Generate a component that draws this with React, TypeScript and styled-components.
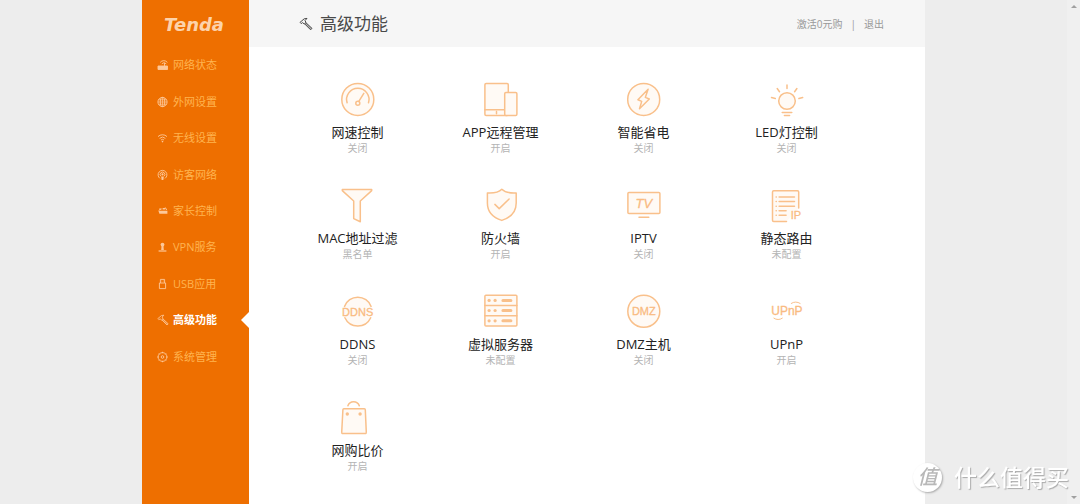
import React from "react";
import styled, { createGlobalStyle, css } from "styled-components";

const GlobalStyle = createGlobalStyle`
  *, *::before, *::after { box-sizing: border-box; }
  body {
    margin: 0;
    background: #ededed;
    font-family: "Open Sans", "Noto Sans CJK SC", sans-serif;
    color: #222;
  }
  button { font: inherit; color: inherit; }
`;

const Page = styled.div`
  display: flex;
  min-height: 100vh;
`;

const Stage = styled.div`
  flex: 1;
  display: flex;
  justify-content: center;
`;

const Shell = styled.div`
  display: flex;
  width: 100%;
  max-width: 783px;
  background: #fff;
`;

const Sidebar = styled.aside`
  flex: 0 0 107px;
  background: #ee6f00;
`;

const Brand = styled.a`
  display: flex;
  align-items: center;
  height: 47px;
  padding: 2px 0 0 22px;
  color: #fdd3ab;
  font: italic bold 18px/20px "DejaVu Sans", sans-serif;
  text-decoration: none;
`;

const Nav = styled.nav`
  display: grid;
  grid-auto-rows: 1fr;
  height: 328px;
`;

const NavLink = styled.a<{ $active?: boolean }>`
  position: relative;
  display: flex;
  align-items: center;
  gap: 4px;
  padding-left: 15px;
  color: #ffb450;
  font-size: 11px;
  line-height: 16px;
  text-decoration: none;

  svg { color: #fdc89a; }

  ${(p) =>
    p.$active &&
    css`
      color: #fff;
      font-weight: bold;

      &::after {
        content: "";
        position: absolute;
        right: 0;
        top: 50%;
        margin-top: -8px;
        border: 8px solid transparent;
        border-left: 0;
        border-right-color: #fff;
      }
    `}
`;

const Main = styled.main`
  flex: 1;
  min-width: 0;
`;

const Header = styled.header`
  display: flex;
  align-items: center;
  justify-content: space-between;
  height: 47px;
  padding: 0 41px 0 50px;
  background: #f6f6f6;
`;

const Heading = styled.h1`
  display: flex;
  align-items: center;
  gap: 7px;
  margin: 0;
  color: #4a4a4a;
  font-size: 17px;
  font-weight: normal;
  line-height: 24px;
`;

const Account = styled.div`
  display: flex;
  gap: 8px;
  color: #999;
  font-size: 10px;
  line-height: 16px;

  a { color: inherit; text-decoration: none; }
`;

const FeatureGrid = styled.div`
  display: grid;
  grid-template-columns: repeat(4, 1fr);
  row-gap: 33px;
  padding: 35px 67px 30px 37px;
`;

const Tile = styled.button`
  display: flex;
  flex-direction: column;
  align-items: center;
  padding: 0;
  border: 0;
  background: none;
  cursor: pointer;
`;

const TileIcon = styled.svg`
  width: 37px;
  height: 37px;
  margin-bottom: 4px;
  overflow: visible;
  fill: #fffaf5;
  stroke: #f9c08b;
  stroke-width: 1.5;
  stroke-linejoin: round;
  stroke-linecap: round;

  .line { fill: none; }
  .thick { fill: none; stroke-width: 3; }
  .solid { fill: #f9c08b; stroke: none; }
  text {
    fill: #f9bb82;
    stroke: #f9bb82;
    stroke-width: 0.3;
    font-family: "Liberation Sans", sans-serif;
    text-anchor: middle;
  }
`;

const TileTitle = styled.span`
  color: #222;
  font-size: 13px;
  line-height: 18px;
`;

const TileStatus = styled.span`
  color: #b4b4b4;
  font-size: 10px;
  line-height: 14px;
`;

const ScrollTrack = styled.div`
  flex: 0 0 13px;
  display: flex;
  flex-direction: column;
  align-items: center;
  justify-content: space-between;
  padding: 5px 0;
  background: #f0f0f0;
`;

const Arrow = styled.i<{ $down?: boolean }>`
  border: 3px solid transparent;
  ${(p) => (p.$down ? "border-top-color: #a0a0a0; border-bottom: 0;" : "border-bottom-color: #a0a0a0; border-top: 0;")}
`;

const Watermark = styled.div`
  position: fixed;
  right: 11px;
  bottom: 11px;
  display: flex;
  align-items: center;
  gap: 12px;
  color: #fff;
  font-size: 23px;
  font-weight: 500;
  line-height: 32px;
  text-shadow: 1px 1px 1px #aaa;
  pointer-events: none;
`;

const Seal = styled.span`
  display: grid;
  place-items: center;
  width: 29px;
  height: 29px;
  border-radius: 50%;
  background: #fff;
  box-shadow: 1px 1px 2px #aaa;
  color: #b8b8b8;
  font-size: 20px;
  font-style: italic;
  line-height: 28px;
  text-shadow: none;
`;

const Hammer = ({ size = 12 }: { size?: number }) => (
  <svg width={size} height={size} viewBox="0 0 14 14" fill="none" stroke="currentColor" strokeWidth="1" strokeLinejoin="round" aria-hidden="true">
    <path d="M1 5.4 5.2 1.8 8 1.4 6 3.6 7 5.4 5.2 7 3.6 5.6 2.2 6.6Z" />
    <path d="M6.8 5.6 13 11.4 11.6 12.8 5.6 6.8" fill="currentColor" fillOpacity="0.4" />
  </svg>
);

const SmallIcon = ({ children }: { children: React.ReactNode }) => (
  <svg width="12" height="12" viewBox="0 0 12 12" fill="none" stroke="currentColor" strokeWidth="0.9" aria-hidden="true">
    {children}
  </svg>
);

const navItems: { label: string; icon: React.ReactNode; active?: boolean }[] = [
  {
    label: "网络状态",
    icon: (
      <SmallIcon>
        <path d="M1 7h9.5v3.5H1z" fill="currentColor" />
        <path d="M7.5 7V4M3.2 3.4a4.6 4.6 0 0 1 7.2 0M4.8 4.8a3 3 0 0 1 4.4 0" />
      </SmallIcon>
    ),
  },
  {
    label: "外网设置",
    icon: (
      <SmallIcon>
        <circle cx="5.5" cy="6" r="4.6" />
        <ellipse cx="5.5" cy="6" rx="2.2" ry="4.6" />
        <path d="M1 6h9M5.5 1.4v9.2M1.6 3.8h7.8M1.6 8.2h7.8" strokeWidth="0.7" />
      </SmallIcon>
    ),
  },
  {
    label: "无线设置",
    icon: (
      <SmallIcon>
        <path d="M1 4.6a6.4 6.4 0 0 1 9 0M2.6 6.4a4.2 4.2 0 0 1 5.8 0M4 8a2.2 2.2 0 0 1 3 0" />
        <circle cx="5.5" cy="9.6" r="0.8" fill="currentColor" stroke="none" />
      </SmallIcon>
    ),
  },
  {
    label: "访客网络",
    icon: (
      <SmallIcon>
        <path d="M3 9.4a4.4 4.4 0 1 1 5 0M3.8 7.2a2.4 2.4 0 1 1 3.4 0" />
        <circle cx="5.5" cy="5.4" r="1.1" fill="currentColor" stroke="none" />
        <path d="M4.2 7.6h2.6L6.4 11H4.6z" fill="currentColor" stroke="none" />
      </SmallIcon>
    ),
  },
  {
    label: "家长控制",
    icon: (
      <SmallIcon>
        <path d="M1.4 5.8h9v3H2.4zM5.6 3h2.8v1.6H5.6zM2.2 3.6h2.2v1.2H2.2z" fill="currentColor" stroke="none" />
        <path d="M2 5.6 4 3.6M8.2 2.4 9.8 5" />
      </SmallIcon>
    ),
  },
  {
    label: "VPN服务",
    icon: (
      <SmallIcon>
        <circle cx="5.5" cy="3.6" r="1.9" fill="currentColor" stroke="none" />
        <path d="M4.5 5h2l.3 4H4.2z" fill="currentColor" stroke="none" />
        <path d="M1.6 10h7.8" strokeWidth="1.2" />
      </SmallIcon>
    ),
  },
  {
    label: "USB应用",
    icon: (
      <SmallIcon>
        <path d="M3.4 5V1.4h4.2V5M2.4 5h6.2v5.6H2.4zM4.6 3h.6M6 3h.6" />
      </SmallIcon>
    ),
  },
  { label: "高级功能", icon: <Hammer />, active: true },
  {
    label: "系统管理",
    icon: (
      <SmallIcon>
        <circle cx="5.5" cy="6" r="4.4" />
        <circle cx="5.5" cy="6" r="1.3" />
        <path d="M5.5 .8v1.4M5.5 9.8v1.4M.3 6h1.4M9.3 6h1.4M1.9 2.4l.9.9M8.2 8.7l.9.9M9.1 2.4l-.9.9M2.8 8.7l-.9.9" />
      </SmallIcon>
    ),
  },
];

const features: { title: string; status: string; icon: React.ReactNode }[] = [
  {
    title: "网速控制",
    status: "关闭",
    icon: (
      <>
        <circle cx="18.8" cy="17.4" r="16" />
        <path className="line" d="M8.1 20.8a11.2 11.2 0 1 1 21.4 0" />
        <circle cx="18.8" cy="21.3" r="2" />
        <path className="line" d="M19.8 19.4 24.8 11.3" />
      </>
    ),
  },
  {
    title: "APP远程管理",
    status: "开启",
    icon: (
      <>
        <rect x="2.9" y="1.5" width="23.4" height="32" rx="1.2" />
        <path className="line" d="M2.9 27.7H22.5M14.5 29.4v2.4" />
        <rect x="22.7" y="10.6" width="12.2" height="22.9" rx="1.2" />
      </>
    ),
  },
  {
    title: "智能省电",
    status: "关闭",
    icon: (
      <>
        <circle cx="18.7" cy="17.4" r="16" />
        <path d="M23.1 7.2 12.9 17.8 16.7 19.4 14.5 26.8 24.3 17 20.3 15.4Z" />
      </>
    ),
  },
  {
    title: "LED灯控制",
    status: "关闭",
    icon: (
      <>
        <circle cx="19" cy="19" r="8.3" />
        <path className="line" d="M19 3v3.4M9.2 6.5 11.5 9.7M28.9 6.5 26.6 9.7M3.5 15.6l3.8 1M34.7 15.6l-3.8 1M14.2 30.5h9.6M16.4 33.6h5.2" />
      </>
    ),
  },
  {
    title: "MAC地址过滤",
    status: "黑名单",
    icon: <path d="M3.3 1.5H32.7V2.6L21.3 13V33.7L14.7 30.6V13L3.3 2.6Z" />,
  },
  {
    title: "防火墙",
    status: "开启",
    icon: (
      <>
        <path d="M19.8 1.2C16.5 4.6 11 5.2 5.4 4.9V15C5.4 24 11 29.6 19.8 32.4 28.5 29.6 34.2 24 34.2 15V4.9C28.5 5.2 23.1 4.6 19.8 1.2Z" />
        <path className="line" d="M12.9 16.4 17.2 20.6 27.1 11" />
      </>
    ),
  },
  {
    title: "IPTV",
    status: "关闭",
    icon: (
      <>
        <rect x="2.9" y="4.5" width="32" height="21" rx="1" />
        <path className="line" d="M14 29.2h9.8" />
        <text x="18.9" y="20.2" fontSize="13" fontStyle="italic">TV</text>
      </>
    ),
  },
  {
    title: "静态路由",
    status: "未配置",
    icon: (
      <>
        <path d="M18.5 33.5H5.7a1.2 1.2 0 0 1-1.2-1.2V4A1.2 1.2 0 0 1 5.7 2.8H29.5A1.2 1.2 0 0 1 30.7 4V20" />
        <path className="line" d="M11.1 9H26.5M11.1 13.6H26.5M11.1 18.2H26.5M11.1 22.7H18.1M11.1 27.2H18.1M8.1 9h.2M8.1 13.6h.2M8.1 18.2h.2M8.1 22.7h.2M8.1 27.2h.2" />
        <text x="27.9" y="31.2" fontSize="11">IP</text>
      </>
    ),
  },
  {
    title: "DDNS",
    status: "关闭",
    icon: (
      <>
        <circle cx="18.8" cy="17.7" r="14.2" stroke="none" />
        <path className="line" d="M5.5 12.4a14.2 14.2 0 0 1 26.6 0M5.9 23.8a14.2 14.2 0 0 0 25.8 0" />
        <text x="18.7" y="22" fontSize="11">DDNS</text>
      </>
    ),
  },
  {
    title: "虚拟服务器",
    status: "未配置",
    icon: (
      <>
        <rect x="2.9" y="1.2" width="32" height="30.8" rx="1" />
        <path className="line" d="M2.9 11.5h32M2.9 21.7h32" />
        <path className="thick" d="M20.9 6.4h8M20.9 16.5h8M20.9 26.8h8" />
        {[6.4, 16.5, 26.8].map((y) => (
          <React.Fragment key={y}>
            <circle className="solid" cx="7.1" cy={y} r="1.6" />
            <circle className="solid" cx="13.1" cy={y} r="1.6" />
          </React.Fragment>
        ))}
      </>
    ),
  },
  {
    title: "DMZ主机",
    status: "关闭",
    icon: (
      <>
        <circle cx="18.8" cy="17.3" r="16" />
        <text x="18.8" y="21.2" fontSize="11">DMZ</text>
      </>
    ),
  },
  {
    title: "UPnP",
    status: "开启",
    icon: (
      <>
        <path className="line" strokeWidth="1" d="M5.9 24.2q4.2 2.8 8.4 0M23.3 9.4q4.4-2.8 8.8 0" />
        <text x="18.9" y="21" fontSize="12">UPnP</text>
      </>
    ),
  },
  {
    title: "网购比价",
    status: "开启",
    icon: (
      <>
        <path d="M4.9 8.8H25.3a1 1 0 0 1 1 1L27.3 32.4a1 1 0 0 1-1 1.1H3.7a1 1 0 0 1-1-1.1L3.9 9.8a1 1 0 0 1 1-1Z" />
        <path className="line" d="M8.9 5.8a6 6 0 0 1 11.4 0" />
        <circle className="solid" cx="8.3" cy="14" r="1.7" />
        <circle className="solid" cx="21.1" cy="14" r="1.7" />
      </>
    ),
  },
];

export default function App() {
  return (
    <Page>
      <GlobalStyle />
      <Stage>
        <Shell>
          <Sidebar>
            <Brand href="#">Tenda</Brand>
            <Nav aria-label="主菜单">
              {navItems.map((item) => (
                <NavLink key={item.label} href="#" $active={item.active} aria-current={item.active ? "page" : undefined}>
                  {item.icon}
                  {item.label}
                </NavLink>
              ))}
            </Nav>
          </Sidebar>
          <Main>
            <Header>
              <Heading>
                <Hammer size={14} />
                高级功能
              </Heading>
              <Account>
                <a href="#">激活0元购</a>
                <span>|</span>
                <a href="#">退出</a>
              </Account>
            </Header>
            <FeatureGrid>
              {features.map((f) => (
                <Tile key={f.title} type="button">
                  <TileIcon viewBox="0 0 37 37" aria-hidden="true">{f.icon}</TileIcon>
                  <TileTitle>{f.title}</TileTitle>
                  <TileStatus>{f.status}</TileStatus>
                </Tile>
              ))}
            </FeatureGrid>
          </Main>
        </Shell>
      </Stage>
      <ScrollTrack aria-hidden="true">
        <Arrow />
        <Arrow $down />
      </ScrollTrack>
      <Watermark>
        <Seal>值</Seal>
        什么值得买
      </Watermark>
    </Page>
  );
}
